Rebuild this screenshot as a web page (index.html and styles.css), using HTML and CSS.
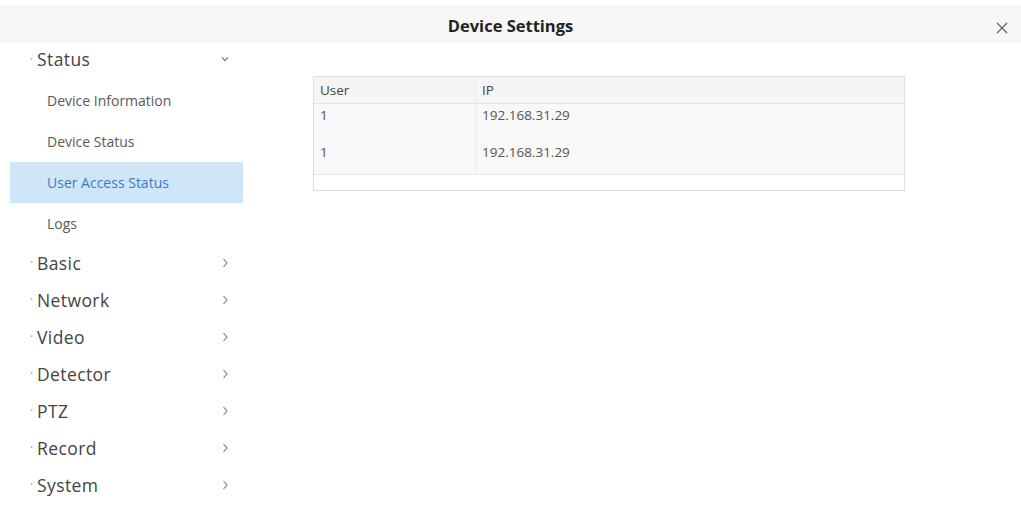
FILE: index.html
```html
<!DOCTYPE html>
<html>
<head>
<meta charset="utf-8">
<link rel="stylesheet" href="styles.css">
</head>
<body>
<div class="page">
  <header class="topbar">
    <div class="title">Device Settings</div>
    <div class="close">
      <svg width="14" height="14" viewBox="0 0 14 14"><path d="M2 2 L12 12 M12 2 L2 12" stroke="#666" stroke-width="1.3" fill="none"/></svg>
    </div>
  </header>
  <div class="body">
    <nav class="sidebar">
      <div class="group open">
        <span class="dot">·</span><span class="label">Status</span>
        <svg class="chev" width="12" height="12" viewBox="0 0 12 12"><path d="M3 4.5 L6 7.5 L9 4.5" stroke="#777" stroke-width="1.1" fill="none"/></svg>
      </div>
      <div class="sub">Device Information</div>
      <div class="sub">Device Status</div>
      <div class="sub active">User Access Status</div>
      <div class="sub">Logs</div>
      <div class="group"><span class="dot">·</span><span class="label">Basic</span><svg class="chev" width="12" height="12" viewBox="0 0 12 12"><path d="M4.5 2 L8 6 L4.5 10" stroke="#777" stroke-width="1.1" fill="none"/></svg></div>
      <div class="group"><span class="dot">·</span><span class="label">Network</span><svg class="chev" width="12" height="12" viewBox="0 0 12 12"><path d="M4.5 2 L8 6 L4.5 10" stroke="#777" stroke-width="1.1" fill="none"/></svg></div>
      <div class="group"><span class="dot">·</span><span class="label">Video</span><svg class="chev" width="12" height="12" viewBox="0 0 12 12"><path d="M4.5 2 L8 6 L4.5 10" stroke="#777" stroke-width="1.1" fill="none"/></svg></div>
      <div class="group"><span class="dot">·</span><span class="label">Detector</span><svg class="chev" width="12" height="12" viewBox="0 0 12 12"><path d="M4.5 2 L8 6 L4.5 10" stroke="#777" stroke-width="1.1" fill="none"/></svg></div>
      <div class="group"><span class="dot">·</span><span class="label">PTZ</span><svg class="chev" width="12" height="12" viewBox="0 0 12 12"><path d="M4.5 2 L8 6 L4.5 10" stroke="#777" stroke-width="1.1" fill="none"/></svg></div>
      <div class="group"><span class="dot">·</span><span class="label">Record</span><svg class="chev" width="12" height="12" viewBox="0 0 12 12"><path d="M4.5 2 L8 6 L4.5 10" stroke="#777" stroke-width="1.1" fill="none"/></svg></div>
      <div class="group"><span class="dot">·</span><span class="label">System</span><svg class="chev" width="12" height="12" viewBox="0 0 12 12"><path d="M4.5 2 L8 6 L4.5 10" stroke="#777" stroke-width="1.1" fill="none"/></svg></div>
    </nav>
    <main class="content">
      <div class="table">
        <div class="row head"><div class="c1">User</div><div class="c2">IP</div></div>
        <div class="row r1"><div class="c1">1</div><div class="c2">192.168.31.29</div></div>
        <div class="row r2"><div class="c1">1</div><div class="c2">192.168.31.29</div></div>
        <div class="row empty"></div>
      </div>
    </main>
  </div>
</div>
</body>
</html>
```
FILE: styles.css
```css
html, body {
  margin: 0;
  padding: 0;
  background: #fff;
}
body {
  font-family: "Open Sans", "Noto Sans", sans-serif;
  color: #333;
  width: 1021px;
  height: 510px;
  overflow: hidden;
}
.page {
  display: flex;
  flex-direction: column;
}
.topbar {
  margin-top: 5px;
  height: 38px;
  background: #f7f7f7;
  display: flex;
  align-items: center;
  justify-content: center;
  position: relative;
}
.title {
  font-weight: 700;
  font-size: 16.5px;
  color: #222;
  letter-spacing: 0;
  padding-top: 2px;
}
.close {
  position: absolute;
  right: 12px;
  top: 13px;
  width: 14px;
  height: 14px;
}
.body {
  display: flex;
}
.sidebar {
  width: 233px;
  margin-left: 10px;
  display: flex;
  flex-direction: column;
  padding-top: 2px;
}
.group {
  height: 37px;
  display: flex;
  align-items: center;
  position: relative;
  padding-left: 20px;
  font-size: 17.5px;
  letter-spacing: 0.4px;
  color: #444;
}
.group.open {
  height: 28px;
  margin-bottom: 7px;
}
.group .dot {
  color: #999;
  font-size: 12px;
  width: 7px;
}
.group .label {
  flex: 1;
}
.group .chev {
  margin-right: 12px;
}
.sub {
  height: 41px;
  display: flex;
  align-items: center;
  padding-left: 37px;
  font-size: 14px;
  color: #5a5a5a;
}
.sub.active {
  background: #cfe5f8;
  color: #3a7dbf;
}
.content {
  flex: 1;
  padding-left: 70px;
  padding-top: 33px;
}
.table {
  width: 590px;
  border: 1px solid #dedede;
  font-size: 13.5px;
  color: #555;
}
.row {
  display: flex;
  align-items: center;
}
.row .c1 {
  width: 155px;
  padding-left: 6px;
  border-right: 1px solid #eaeaea;
  align-self: stretch;
  display: flex;
  align-items: center;
}
.row .c2 {
  padding-left: 6px;
}
.head {
  height: 26px;
  background: #f5f5f5;
  border-bottom: 1px solid #e2e2e2;
  color: #444;
}
.r1 {
  height: 26px;
  background: #f8f8f8;
  align-items: flex-start;
}
.r1 .c1, .r1 .c2 {
  padding-top: 2px;
  align-items: flex-start;
}
.r2 {
  height: 44px;
  background: #f8f8f8;
  border-bottom: 1px solid #eaeaea;
  align-items: center;
}
.r2 .c1, .r2 .c2 {
  align-items: center;
}
.empty {
  height: 15px;
  background: #fff;
}
```
